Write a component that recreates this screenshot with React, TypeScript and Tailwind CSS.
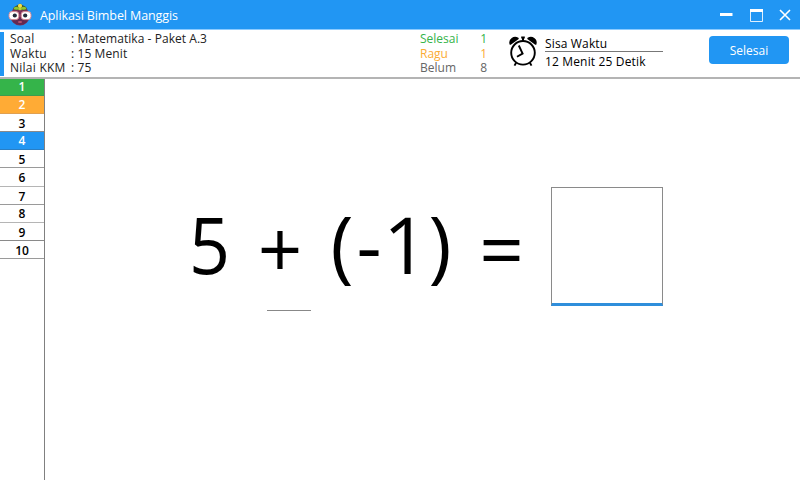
import type { ReactNode } from "react";

const details = [
  { label: "Soal", value: "Matematika - Paket A.3", track: "tracking-[0.05px]" },
  { label: "Waktu", value: "15 Menit", track: "tracking-[0.1px]" },
  { label: "Nilai KKM", value: "75", track: "tracking-[0.1px]" },
];

const statuses = [
  { label: "Selesai", count: 1, color: "text-[#35b44a]" },
  { label: "Ragu", count: 1, color: "text-[#fbac35]" },
  { label: "Belum", count: 8, color: "text-[#666666]" },
];

const questions = [
  { n: 1, style: "h-[17px] bg-[#35b44a] text-white border-[#3f9b4e]" },
  { n: 2, style: "h-[18px] pt-px bg-[#ffab35] text-white border-[#e0a050]" },
  { n: 3, style: "h-[18px] pt-[2px] text-black border-[#8a8a8a]" },
  { n: 4, style: "h-[18px] pt-px bg-[#2196f3] text-white border-[#2a7fc4]" },
  { n: 5, style: "h-[18px] pt-[2px] text-black border-[#9a9a9a]" },
  { n: 6, style: "h-[19px] pt-[2px] text-black border-[#b5b5b5]" },
  { n: 7, style: "h-[18px] pt-[2px] text-black border-[#9a9a9a]" },
  { n: 8, style: "h-[18px] pt-px text-black border-[#b5b5b5]" },
  { n: 9, style: "h-[18px] pt-[2px] text-black border-[#8a8a8a]" },
  { n: 10, style: "h-[18px] pt-[2px] text-black border-[#9a9a9a]" },
];

function Mascot() {
  return (
    <svg width="24" height="24" viewBox="0 0 24 24">
      <circle cx="12" cy="13" r="9.600" fill="#7b3158" />
      <path d="M4 17.500a9.600 9.600 0 0 0 16 0L12 15Z" fill="#632a52" />
      <path d="M5 6C6.500 2.500 9 3 12 .5c3 2.500 6 2 7 5.500L15.500 7.500 12 6.500 8.500 7.500Z" fill="#40542a" />
      <ellipse cx="8.300" cy="5.300" rx="2.600" ry="1.500" fill="#8fc62f" />
      <ellipse cx="15.700" cy="5.300" rx="2.600" ry="1.500" fill="#8fc62f" />
      <ellipse cx="12" cy="6" rx="1.800" ry="1.300" fill="#b5d334" />
      <circle cx="12" cy="2.900" r="2.100" fill="#f3df45" />
      <rect x="1" y="8.600" width="9.800" height="8" rx="3" fill="#fff" stroke="#d58a96" strokeWidth="1" />
      <rect x="13.200" y="8.600" width="9.800" height="8" rx="3" fill="#fff" stroke="#d58a96" strokeWidth="1" />
      <circle cx="6.800" cy="12.500" r="2.100" fill="#202b3a" />
      <circle cx="17.200" cy="12.500" r="2.100" fill="#202b3a" />
      <path d="M10.300 19h3.400" fill="none" stroke="#d9657e" strokeWidth="1.300" />
    </svg>
  );
}

function AlarmClock() {
  return (
    <svg width="30" height="32" viewBox="0 0 30 32" fill="none" stroke="#000">
      <circle cx="14" cy="17.800" r="11.800" strokeWidth="1.900" />
      <path d="M1.300 9A5 5 0 0 1 8.900 3.500Z" fill="#000" strokeWidth="1.600" strokeLinejoin="round" />
      <path d="M26.700 9A5 5 0 0 0 19.100 3.500Z" fill="#000" strokeWidth="1.600" strokeLinejoin="round" />
      <path d="M12.200 2.500h3.600M14 3v3" strokeWidth="2" />
      <path d="M9.800 10.500l3.800 8-5.600 3.200" strokeWidth="1.900" />
      <path d="M7 28L5.500 30.600M21 28l1.500 2.600" strokeWidth="1.900" />
    </svg>
  );
}

function Glyph({ className, children }: { className: string; children: ReactNode }) {
  return <span className={`flex justify-center ${className}`}>{children}</span>;
}

export default function App() {
  return (
    <div className="flex h-[480px] w-[800px] flex-col overflow-hidden bg-white font-['Open_Sans','Noto_Sans',sans-serif] text-black">
      <header className="flex h-[30px] shrink-0 items-center border-b border-[#8ccbff] bg-[#2196f3] text-white">
        <div className="ml-[8px] mt-px"><Mascot /></div>
        <h1 className="ml-[8px] mt-[2px] text-[12.500px] leading-4 tracking-[-0.1px] whitespace-nowrap">Aplikasi Bimbel Manggis</h1>
        <svg className="ml-auto mr-[8px]" width="74" height="20" viewBox="0 0 74 20" fill="none" stroke="#fff">
          <path d="M2 9.500h12.500" strokeWidth="3" />
          <path d="M32.500 5v11.500h12V5" strokeWidth="1" strokeOpacity="0.850" />
          <path d="M32 5.500h13" strokeWidth="3" />
          <path d="M62 5l10 10M72 5L62 15" strokeWidth="1.600" />
        </svg>
      </header>

      <section className="flex h-[49px] shrink-0 border-b-2 border-[#b4b4b4]">
        <div className="mt-[2px] h-[44px] w-[4px] bg-[#2196f3]" />
        <dl className="mt-[2px] ml-[6px] w-[410px] text-[12px] leading-[14.700px] text-[#222]">
          {details.map((d) => (
            <div key={d.label} className="flex whitespace-nowrap">
              <dt className="w-[61px] tracking-[0.25px]">{d.label}</dt>
              <dd className={d.track}>: {d.value}</dd>
            </div>
          ))}
        </dl>
        <ul className="mt-[2px] w-[67px] text-[12px] leading-[14.500px]">
          {statuses.map((s) => (
            <li key={s.label} className={`flex justify-between ${s.color}`}>
              <span>{s.label}</span>
              <span>{s.count}</span>
            </li>
          ))}
        </ul>
        <div className="mt-[5px] ml-[22px]"><AlarmClock /></div>
        <div className="mt-[6px] ml-[6px] w-[118px] text-[12px] tracking-[0.15px] whitespace-nowrap">
          <div className="h-[16px] border-b border-[#777] leading-4">Sisa Waktu</div>
          <div className="mt-[2px] leading-4">12 Menit 25 Detik</div>
        </div>
        <button className="mt-[6px] ml-[46px] h-[28px] w-[80px] rounded-[4px] bg-[#2196f3] pt-[2px] text-[12px] text-white">Selesai</button>
      </section>

      <main className="flex flex-1">
        <nav className="w-[45px] border-r border-[#808080] text-center text-[12px] font-semibold">
          {questions.map((q) => (
            <div key={q.n} className={`flex items-center justify-center border-b leading-none ${q.style}`}>{q.n}</div>
          ))}
        </nav>
        <div className="flex flex-1 pt-[108px] pl-[143px]">
          <div>
            <div className="flex h-[118px] items-center pb-[4px] text-[78px] leading-none">
              <Glyph className="w-[43px] scale-x-92">5</Glyph>
              <Glyph className="w-[98px] pt-[8px]">+</Glyph>
              <Glyph className="w-[26px]">(</Glyph>
              <Glyph className="w-[28px]">-</Glyph>
              <Glyph className="w-[45px]">1</Glyph>
              <Glyph className="w-[24px]">)</Glyph>
              <Glyph className="w-[99px] pt-[8px]">=</Glyph>
            </div>
            <div className="mt-[5px] ml-[79px] h-px w-[44px] bg-[#888]" />
          </div>
          <div className="h-[119px] w-[112px] border border-b-[3px] border-[#8a8a8a] border-b-[#2f8edb]" />
        </div>
      </main>
    </div>
  );
}
